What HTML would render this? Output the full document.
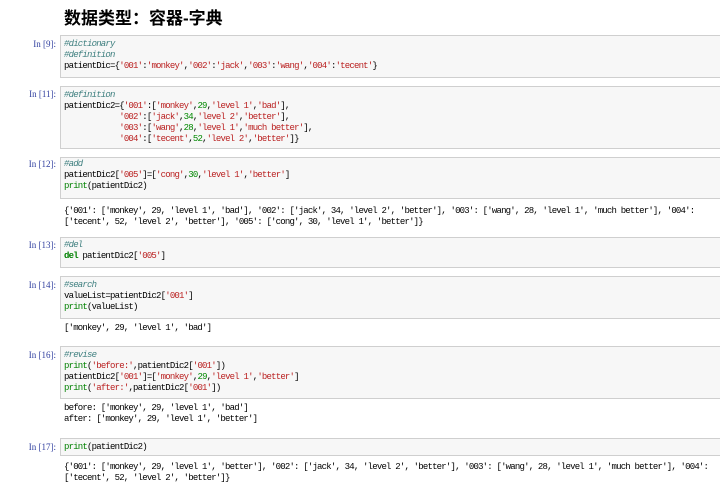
<!DOCTYPE html>
<html><head><meta charset="utf-8"><style>
body{margin:0;width:720px;height:488px;background:#fff;overflow:hidden;position:relative;font-family:"Liberation Mono","Noto Sans CJK SC",monospace;}
h1{position:absolute;left:64px;top:4px;margin:0;font:bold 17px "Liberation Sans","Noto Sans CJK SC",sans-serif;color:#000;}
.box{position:absolute;left:60px;width:670px;background:#f7f7f7;border:1px solid #cfcfcf;}
.p{position:absolute;width:56px;text-align:right;color:#303f9f;font:9px "Liberation Serif",serif;}
.t{position:absolute;left:64px;font-size:9px;letter-spacing:-0.8px;white-space:pre;color:#000;line-height:11px;}
.c{color:#408080;font-style:italic}.s{color:#ba2121}.n{color:#080}.k{color:#008000;font-weight:bold}.b{color:#008000}
</style></head><body>
<h1>数据类型：容器-字典</h1>

<div class="box" style="top:35px;height:41px"></div>
<div class="p" style="top:39px">In [9]:</div>
<div class="t" style="top:39px"><span class="c">#dictionary</span>
<span class="c">#definition</span>
patientDic={<span class="s">'001'</span>:<span class="s">'monkey'</span>,<span class="s">'002'</span>:<span class="s">'jack'</span>,<span class="s">'003'</span>:<span class="s">'wang'</span>,<span class="s">'004'</span>:<span class="s">'tecent'</span>}</div>

<div class="box" style="top:86px;height:61px"></div>
<div class="p" style="top:89px">In [11]:</div>
<div class="t" style="top:90px"><span class="c">#definition</span>
patientDic2={<span class="s">'001'</span>:[<span class="s">'monkey'</span>,<span class="n">29</span>,<span class="s">'level 1'</span>,<span class="s">'bad'</span>],
            <span class="s">'002'</span>:[<span class="s">'jack'</span>,<span class="n">34</span>,<span class="s">'level 2'</span>,<span class="s">'better'</span>],
            <span class="s">'003'</span>:[<span class="s">'wang'</span>,<span class="n">28</span>,<span class="s">'level 1'</span>,<span class="s">'much better'</span>],
            <span class="s">'004'</span>:[<span class="s">'tecent'</span>,<span class="n">52</span>,<span class="s">'level 2'</span>,<span class="s">'better'</span>]}</div>

<div class="box" style="top:157px;height:40px"></div>
<div class="p" style="top:159px">In [12]:</div>
<div class="t" style="top:159px"><span class="c">#add</span>
patientDic2[<span class="s">'005'</span>]=[<span class="s">'cong'</span>,<span class="n">30</span>,<span class="s">'level 1'</span>,<span class="s">'better'</span>]
<span class="b">print</span>(patientDic2)</div>
<div class="t" style="top:206px">{'001': ['monkey', 29, 'level 1', 'bad'], '002': ['jack', 34, 'level 2', 'better'], '003': ['wang', 28, 'level 1', 'much better'], '004':
['tecent', 52, 'level 2', 'better'], '005': ['cong', 30, 'level 1', 'better']}</div>

<div class="box" style="top:237px;height:29px"></div>
<div class="p" style="top:240px">In [13]:</div>
<div class="t" style="top:240px"><span class="c">#del</span>
<span class="k">del</span> patientDic2[<span class="s">'005'</span>]</div>

<div class="box" style="top:276px;height:41px"></div>
<div class="p" style="top:280px">In [14]:</div>
<div class="t" style="top:280px"><span class="c">#search</span>
valueList=patientDic2[<span class="s">'001'</span>]
<span class="b">print</span>(valueList)</div>
<div class="t" style="top:323px">['monkey', 29, 'level 1', 'bad']</div>

<div class="box" style="top:346px;height:51px"></div>
<div class="p" style="top:350px">In [16]:</div>
<div class="t" style="top:350px"><span class="c">#revise</span>
<span class="b">print</span>(<span class="s">'before:'</span>,patientDic2[<span class="s">'001'</span>])
patientDic2[<span class="s">'001'</span>]=[<span class="s">'monkey'</span>,<span class="n">29</span>,<span class="s">'level 1'</span>,<span class="s">'better'</span>]
<span class="b">print</span>(<span class="s">'after:'</span>,patientDic2[<span class="s">'001'</span>])</div>
<div class="t" style="top:403px">before: ['monkey', 29, 'level 1', 'bad']
after: ['monkey', 29, 'level 1', 'better']</div>

<div class="box" style="top:438px;height:16px"></div>
<div class="p" style="top:442px">In [17]:</div>
<div class="t" style="top:442px"><span class="b">print</span>(patientDic2)</div>
<div class="t" style="top:462px">{'001': ['monkey', 29, 'level 1', 'better'], '002': ['jack', 34, 'level 2', 'better'], '003': ['wang', 28, 'level 1', 'much better'], '004':
['tecent', 52, 'level 2', 'better']}</div>
</body></html>
